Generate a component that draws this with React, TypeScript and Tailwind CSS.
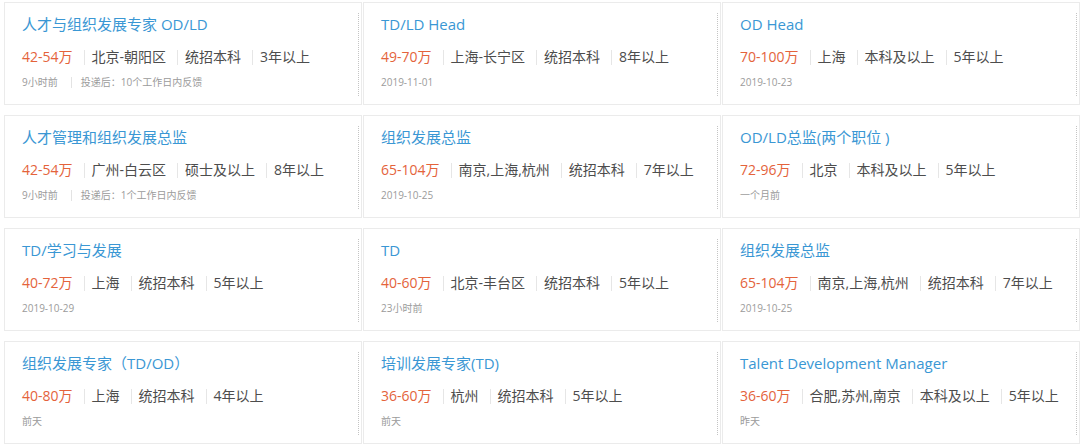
import React from 'react';

interface Job {
  title: string;
  salary: string;
  tags: string[];
  footer: string[];
}

const jobs: Job[] = [
  { title: '人才与组织发展专家 OD/LD', salary: '42-54万', tags: ['北京-朝阳区', '统招本科', '3年以上'], footer: ['9小时前', '投递后：10个工作日内反馈'] },
  { title: 'TD/LD Head', salary: '49-70万', tags: ['上海-长宁区', '统招本科', '8年以上'], footer: ['2019-11-01'] },
  { title: 'OD Head', salary: '70-100万', tags: ['上海', '本科及以上', '5年以上'], footer: ['2019-10-23'] },
  { title: '人才管理和组织发展总监', salary: '42-54万', tags: ['广州-白云区', '硕士及以上', '8年以上'], footer: ['9小时前', '投递后：1个工作日内反馈'] },
  { title: '组织发展总监', salary: '65-104万', tags: ['南京,上海,杭州', '统招本科', '7年以上'], footer: ['2019-10-25'] },
  { title: 'OD/LD总监(两个职位 )', salary: '72-96万', tags: ['北京', '本科及以上', '5年以上'], footer: ['一个月前'] },
  { title: 'TD/学习与发展', salary: '40-72万', tags: ['上海', '统招本科', '5年以上'], footer: ['2019-10-29'] },
  { title: 'TD', salary: '40-60万', tags: ['北京-丰台区', '统招本科', '5年以上'], footer: ['23小时前'] },
  { title: '组织发展总监', salary: '65-104万', tags: ['南京,上海,杭州', '统招本科', '7年以上'], footer: ['2019-10-25'] },
  { title: '组织发展专家（TD/OD）', salary: '40-80万', tags: ['上海', '统招本科', '4年以上'], footer: ['前天'] },
  { title: '培训发展专家(TD)', salary: '36-60万', tags: ['杭州', '统招本科', '5年以上'], footer: ['前天'] },
  { title: 'Talent Development Manager', salary: '36-60万', tags: ['合肥,苏州,南京', '本科及以上', '5年以上'], footer: ['昨天'] },
];

function JobCard({ job }: { job: Job }) {
  return (
    <div className="flex h-[103px] border border-[#ebebeb] bg-white pt-[10px] pb-[8px] pl-[17px] pr-[2px]">
      <div className="flex flex-1 flex-col border-r border-dotted border-[#c4c4c4] pt-[1px]">
        {/* Title */}
        <div className="text-[15px] leading-[20px] text-[#3a97d4] whitespace-nowrap">{job.title}</div>

        {/* Salary + tags */}
        <div className="mt-[13px] flex items-center text-[14px] leading-[20px] whitespace-nowrap">
          <span className="text-[#e4633b]">{job.salary}</span>
          {job.tags.map((tag, i) => (
            <React.Fragment key={i}>
              <span className="ml-[11px] mr-[7px] h-[15px] w-px bg-[#e6e6e6]" />
              <span className="text-[#4d4d4d]">{tag}</span>
            </React.Fragment>
          ))}
        </div>

        {/* Footer */}
        <div className="mt-[7px] flex items-center text-[10px] leading-[16px] text-[#9b9b9b] whitespace-nowrap">
          {job.footer.map((f, i) => (
            <React.Fragment key={i}>
              {i > 0 && <span className="ml-[13px] mr-[9px] h-[11px] w-px bg-[#e3e3e3]" />}
              <span>{f}</span>
            </React.Fragment>
          ))}
        </div>
      </div>
    </div>
  );
}

export default function App() {
  return (
    <div
      className="h-[446px] w-[1080px] overflow-hidden bg-white pl-[4px] pt-[2px]"
      style={{ fontFamily: '"Open Sans", "Noto Sans CJK SC", sans-serif' }}
    >
      <div className="grid grid-cols-3 gap-x-px gap-y-[10px]">
        {jobs.map((job, idx) => (
          <JobCard key={idx} job={job} />
        ))}
      </div>
    </div>
  );
}
